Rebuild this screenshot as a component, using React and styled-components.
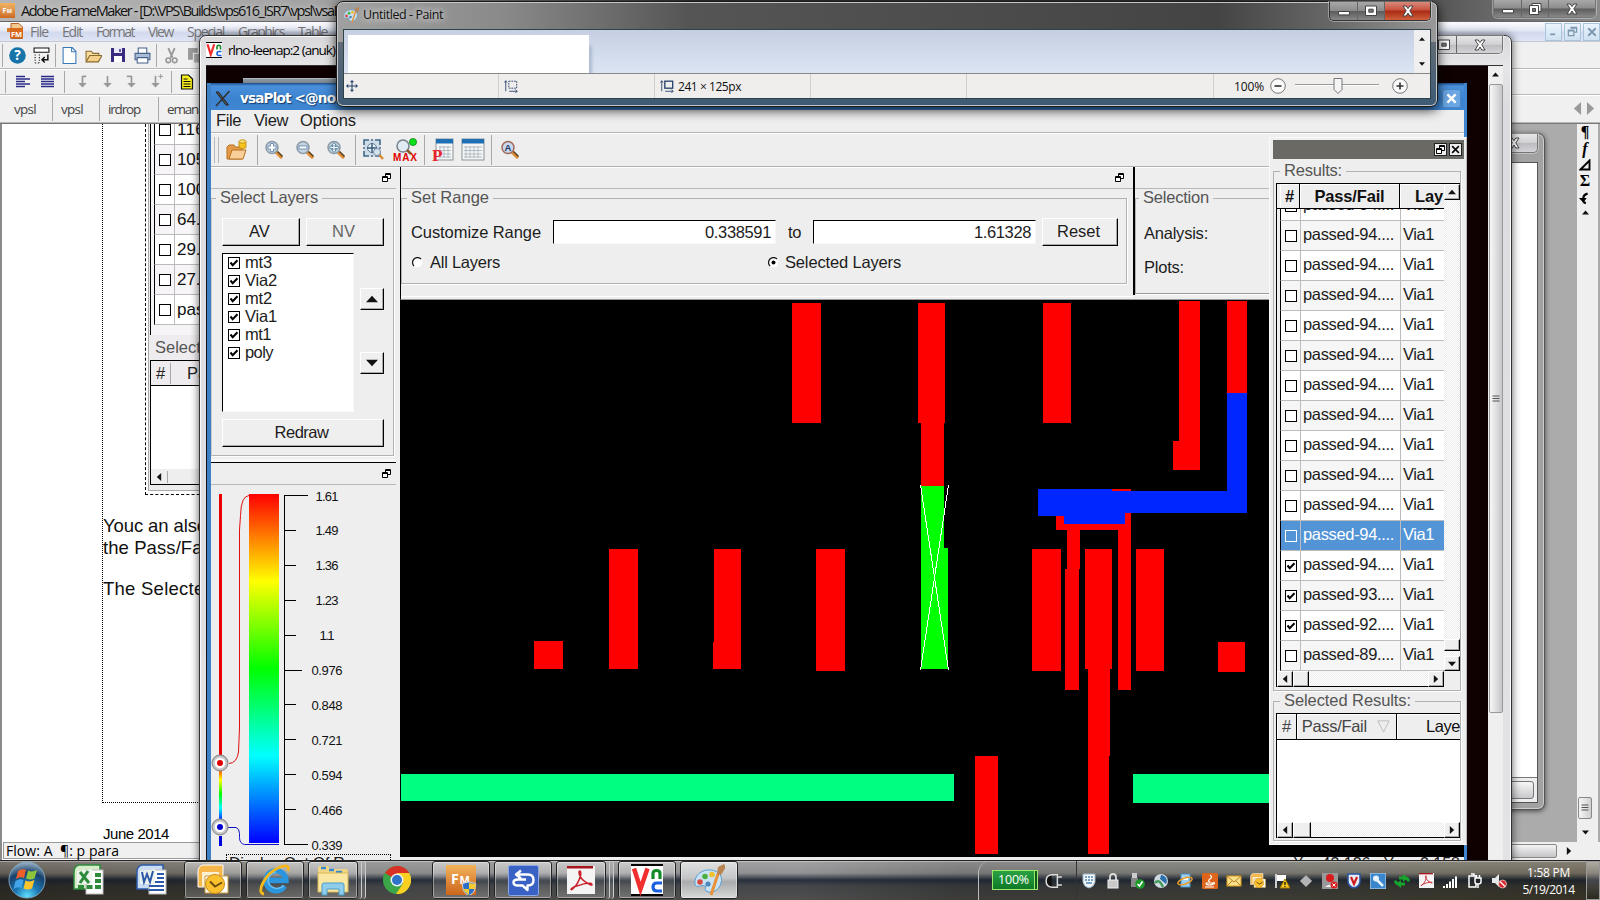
import React, { useLayoutEffect, useRef } from "react";
import styled, { createGlobalStyle, css } from "styled-components";

const helv = '"Liberation Sans", Arial, sans-serif';
const segoe = '"Open Sans", "Noto Sans", sans-serif';

const Global = createGlobalStyle`
  * { box-sizing: border-box; }
  html, body { margin: 0; padding: 0; }
  body { width: 1600px; height: 900px; overflow: hidden; font-family: ${helv}; }
  svg { display: block; flex: none; }
`;

const FitSpan = styled.span`
  display: inline-block;
  white-space: pre;
  flex: none;
`;

/* Tracks its text so that it fills a given width. */
function Fit({ w, children }) {
  const ref = useRef(null);
  useLayoutEffect(() => {
    const el = ref.current;
    el.style.letterSpacing = "0px";
    const natural = el.getBoundingClientRect().width;
    el.style.letterSpacing = (w - natural) / el.textContent.length + "px";
  }, [w, children]);
  return <FitSpan ref={ref}>{children}</FitSpan>;
}

const Desktop = styled.div`
  position: relative;
  width: 1600px;
  height: 900px;
  overflow: hidden;
  background: #ababab;
`;

/* ---------- FrameMaker ---------- */
const Frame = styled.section`
  position: absolute;
  inset: 0 0 40px 0;
  display: flex;
  flex-direction: column;
  background: #f0f0f0;
  font-family: ${segoe};
`;
const FrameTitle = styled.header`
  height: 22px;
  flex: none;
  display: flex;
  align-items: flex-start;
  justify-content: space-between;
  padding-right: 4px;
  background: linear-gradient(90deg, #b5b5b5 0, #a2a2a2 320px, #333 700px, #333 1200px, #5a5a5a 1450px, #8a8a8a 1600px);
  border-bottom: 1px solid #666;
`;
const TitleText = styled.div`
  display: flex;
  align-items: center;
  gap: 6px;
  height: 21px;
  font-size: 14.5px;
  color: #111;
  text-shadow: 0 0 6px #ddd;
`;
const MenuRow = styled.nav`
  height: 20px;
  flex: none;
  display: flex;
  align-items: center;
  background: linear-gradient(#fbfcff, #e4e8f5 45%, #d3daee 55%, #dfe4f6);
  font-size: 14px;
  color: #777;
  padding-left: 7px;
  border-bottom: 1px solid #c8c8d0;
`;
const MenuItem = styled.span`
  width: ${(p) => p.$w}px;
  flex: none;
`;
const Bar = styled.div`
  height: ${(p) => p.$h}px;
  flex: none;
  display: flex;
  align-items: center;
  border-bottom: 1px solid #b9b9b9;
  box-shadow: 0 1px #fff;
  padding-left: ${(p) => p.$pl || 0}px;
`;
const Sep = styled.i`
  width: 1px;
  align-self: stretch;
  margin: 2px ${(p) => p.$r ?? 6}px 1px ${(p) => p.$l ?? 6}px;
  background: #a8a8a8;
  flex: none;
`;
const Cell = styled.span`
  width: ${(p) => p.$w}px;
  flex: none;
  display: flex;
  justify-content: center;
`;
const DocTab = styled.span`
  width: ${(p) => p.$w}px;
  height: 24px;
  flex: none;
  display: flex;
  align-items: center;
  padding-left: ${(p) => p.$pl || 8}px;
  font-size: 13.5px;
  color: #444;
  border-right: 1px solid #aaa;
`;
const Spacer = styled.div`
  flex: 1;
`;
const MdiButton = styled.span`
  width: 17px;
  height: 18px;
  margin-left: 2px;
  display: grid;
  place-items: center;
  border: 1px solid #a9c3da;
  background: linear-gradient(#e9f3fc, #cfe2f2);
`;
const Workspace = styled.div`
  flex: 1;
  min-height: 0;
  display: flex;
  border-top: 1px solid #777;
  background: #ababab;
`;
const DocPane = styled.div`
  width: 210px;
  display: flex;
  flex-direction: column;
  border-left: 2px solid #8b8b8b;
  background: #fff;
`;
const Page = styled.div`
  margin-left: 100px;
  height: 679px;
  flex: none;
  padding-left: 42px;
  border-left: 1px dotted #000;
  border-bottom: 1px dotted #000;
  overflow: hidden;
`;
const Figure = styled.div`
  height: 371px;
  display: flex;
  flex-direction: column;
  border-left: 1px dashed #000;
  border-bottom: 1px dashed #000;
  padding: 0 0 3px 2px;
  font-family: ${helv};
`;
const FigPanel = styled.div`
  flex: 1;
  display: flex;
  flex-direction: column;
  background: #eeecee;
  border-left: 1px solid #aaa;
  border-bottom: 1px solid #aaa;
  padding-left: 1px;
`;
const FigTable = styled.div`
  height: 211px;
  flex: none;
  overflow: hidden;
  border-left: 1px solid #000;
  padding-left: 3px;
  background: #f6f4f6;
`;
const FigRow = styled.div`
  height: 30px;
  display: flex;
  align-items: center;
  border-left: 1px solid #000;
  border-bottom: 1px solid #bbb;
  background: ${(p) => (p.$alt ? "#f7f5f7" : "#fff")};
  font-size: 17px;
  color: #111;
  &:first-child { margin-top: -9px; }
`;
const FigCheck = styled.span`
  width: 20px;
  height: 100%;
  display: grid;
  place-items: center;
  border-right: 1px solid #bbb;
  margin-right: 2px;
  flex: none;
`;
const FigLegend = styled.div`
  height: 25px;
  flex: none;
  display: flex;
  align-items: center;
  padding-left: 5px;
  font-size: 16.5px;
  color: #555;
`;
const FigHead = styled.div`
  height: 26px;
  flex: none;
  display: flex;
  align-items: center;
  border: 1px solid #000;
  border-width: 1px 0 1px 1px;
  font-size: 16.5px;
  color: #222;
`;
const FigBody = styled.div`
  flex: 1;
  display: flex;
  flex-direction: column;
  justify-content: flex-end;
  border-left: 1px solid #000;
  border-bottom: 1px solid #000;
  background: #fff;
  margin-bottom: 5px;
`;
const FigScroll = styled.div`
  height: 15px;
  background: #eee;
  display: flex;
  align-items: center;
`;
const Para = styled.p`
  margin: ${(p) => p.$mt}px 0 0 -42px;
  height: 22px;
  font: 18.5px/22px ${helv};
  color: #111;
`;
const Footer = styled.div`
  font: 15px/18px ${helv};
  padding: 22px 0 0 101px;
  flex: none;
  height: 39px;
`;
const FlowBar = styled.div`
  height: 17px;
  flex: none;
  display: flex;
  align-items: center;
  padding-left: 2px;
  margin-left: 1px;
  font-size: 14px;
  line-height: 15px;
  background: #f0f0f0;
  border: 1px solid #999;
`;
const SymbolStrip = styled.div`
  width: 23px;
  margin-left: auto;
  display: flex;
  flex-direction: column;
  align-items: center;
  background: #efefef;
  border-right: 2px solid #aaa;
  padding-right: 5px;
  color: #000;
`;
const Symbol = styled.span`
  height: ${(p) => p.$h || 16.4}px;
  flex: none;
  display: grid;
  place-items: center;
  font: bold 16px/16px "Liberation Serif", serif;
  font-style: ${(p) => (p.$italic ? "italic" : "normal")};
`;
const ScrollThumb = styled.span`
  width: 14px;
  height: 22px;
  margin-top: 577px;
  flex: none;
  display: grid;
  place-items: center;
  border: 1px solid #888;
  border-radius: 2px;
  background: linear-gradient(90deg, #f5f5f5, #cfcfcf);
`;
const BottomScroll = styled.div`
  position: absolute;
  right: 0;
  bottom: 0;
  width: 90px;
  height: 18px;
  display: flex;
  align-items: center;
  background: #efefef;
  gap: 8px;
`;
const HThumb = styled.span`
  width: 47px;
  height: 14px;
  border: 1px solid #888;
  border-radius: 2px;
  background: linear-gradient(#f5f5f5, #c4c4c8);
`;
const BackWindow = styled.div`
  position: absolute;
  left: 1400px;
  top: 133px;
  width: 145px;
  height: 677px;
  border: 1px solid #555;
  border-radius: 7px;
  background: #a2a2a2;
  box-shadow: 0 1px 5px rgba(0, 0, 0, 0.6), inset 0 0 0 1px #ccc;
  padding: 0 6px 6px;
  display: flex;
  flex-direction: column;
`;
const BackTitle = styled.div`
  height: 28px;
  display: flex;
  justify-content: flex-end;
`;
const BackBody = styled.div`
  flex: 1;
  display: flex;
  flex-direction: column;
  justify-content: flex-end;
  border: 1px solid #555;
  background: #fff;
`;
const BackFoot = styled.div`
  height: 25px;
  padding: 3px;
  border-top: 1px solid #777;
  background: #eee;
`;
const BackThumb = styled.div`
  height: 18px;
  border: 1px solid #777;
  border-radius: 3px;
  background: linear-gradient(#f7f7f7, #c8c8cc);
`;

/* ---------- caption buttons ---------- */
const Caption = styled.div`
  display: flex;
  height: ${(p) => p.$h || 18}px;
  border: 1px solid ${(p) => (p.$dark ? "#333" : "#777")};
  border-top: 0;
  border-radius: 0 0 5px 5px;
  overflow: hidden;
  box-shadow: 0 0 0 1px rgba(255, 255, 255, 0.35);
`;
const CapBtn = styled.span`
  width: ${(p) => p.$w}px;
  display: grid;
  place-items: center;
  border-right: 1px solid #666;
  background: ${(p) =>
    p.$red
      ? "linear-gradient(#d98a7c, #c8503c 45%, #a82a14 50%, #d0603c)"
      : p.$light
      ? "linear-gradient(#e6e6e8, #d0d0d4 50%, #bcbcc0 52%, #d4d4d8)"
      : "linear-gradient(#a8a8a8, #8c8c8c 48%, #5c5c5c 52%, #888)"};
  &:last-child { border-right: 0; }
`;
const CapIcon = ({ kind, size = 12 }) => (
  <svg width={size + 2} height={size} viewBox="0 0 14 12" fill="none" stroke="#444" strokeLinejoin="round">
    {kind === "min" && <rect x="1.5" y="6.5" width="11" height="3.4" fill="#fff" />}
    {kind === "max" && (
      <>
        <rect x="1.5" y="1" width="11" height="9.5" fill="#fff" />
        <rect x="4.8" y="4.2" width="4.4" height="3" fill="#777" />
      </>
    )}
    {kind === "restore" && (
      <>
        <rect x="4" y="0.5" width="9" height="8" fill="#fff" />
        <rect x="1.5" y="2.5" width="9" height="9" fill="#fff" />
        <rect x="4.5" y="5.5" width="3" height="3" fill="#777" />
      </>
    )}
    {kind === "x" && (
      <path d="M2 1h3.2L7 3.6 8.800 1H12L8.800 5.800 12 11H8.800L7 8 5.200 11H2l3.200-5.200z" fill="#fff" />
    )}
  </svg>
);

/* ---------- VNC window ---------- */
const Vnc = styled.section`
  position: absolute;
  left: 199px;
  top: 35px;
  width: 1313px;
  height: 840px;
  border: 1px solid #333;
  border-radius: 7px 7px 0 0;
  padding: 0 8px 0 6px;
  background: linear-gradient(#d8d8da, #e6e6e8 30px, #dcdce0 70px, #e3e3e6);
  box-shadow: 0 0 9px rgba(0, 0, 0, 0.65), inset 0 0 0 1px #fafafa;
`;
const VncTitle = styled.header`
  height: 29px;
  display: flex;
  align-items: flex-start;
  justify-content: space-between;
  font: 13.5px ${segoe};
  color: #000;
`;
const VncName = styled.div`
  display: flex;
  align-items: center;
  gap: 6px;
  height: 27px;
`;
const VncClient = styled.div`
  display: flex;
  height: 810px;
  border-top: 1px solid #333;
  border-left: 1px solid #111;
  background: #0f0002;
`;
const RemoteDesk = styled.div`
  flex: 1;
  padding-top: 12px;
`;
const RemoteBack = styled.div`
  margin-left: 36px;
  width: 700px;
  height: 8px;
  background: linear-gradient(#8f9aa4, #66717c);
  border-top: 1px solid #b0b8c0;
`;
const VScroll = styled.div`
  width: 15px;
  display: flex;
  flex-direction: column;
  align-items: center;
  background: #efefef;
  padding-top: 5px;
`;
const VThumb = styled.div`
  width: 14px;
  height: 629px;
  margin-top: 6px;
  border: 1px solid #999;
  border-radius: 2px;
  background: linear-gradient(90deg, #f7f7f7, #e2e2e4 45%, #c6c6ca);
  display: grid;
  place-items: center;
`;

/* ---------- vsaPlot ---------- */
const Vsa = styled.section`
  position: absolute;
  left: 207px;
  top: 83px;
  width: 1260px;
  height: 778px;
  display: flex;
  flex-direction: column;
  border-left: 4px solid #3f7fc4;
  border-right: 3px solid #3f86d0;
  background: #eee;
  color: #1c1c1c;
  font-size: 16.5px;
`;
const VsaTitle = styled.header`
  height: 27px;
  flex: none;
  display: flex;
  align-items: center;
  justify-content: space-between;
  padding: 3px 3px 0 3px;
  background: linear-gradient(#1c4d88, #4a90dc 3px, #3b82cf 60%, #3f86d2);
  color: #fff;
  font: bold 13.5px "DejaVu Sans", sans-serif;
  text-shadow: 1px 1px 1px #123a6b;
`;
const VsaName = styled.span`
  display: flex;
  align-items: center;
  gap: 9px;
`;
const VsaClose = styled.span`
  width: 19px;
  height: 19px;
  display: grid;
  place-items: center;
  border-radius: 3px;
  background: #6aa6e4;
  box-shadow: inset 0 0 0 1px #4a86c4;
`;
const VsaMenu = styled.nav`
  height: 23px;
  flex: none;
  display: flex;
  align-items: center;
  padding: 0 0 1px 5px;
  border-bottom: 1px solid #b4b4b4;
`;
const VsaTools = styled.div`
  height: 34px;
  flex: none;
  display: flex;
  align-items: center;
  border-bottom: 1px solid #b0b0b0;
  box-shadow: 0 1px #fff, inset 0 1px #fff;
  padding-left: 3px;
`;
const Handle = styled.i`
  width: 5px;
  height: 26px;
  border: 1px solid #b8b8b8;
  border-width: 0 1px;
`;
const Main = styled.div`
  flex: 1;
  min-height: 0;
  display: flex;
`;
const Side = styled.aside`
  width: 189px;
  flex: none;
  display: flex;
  flex-direction: column;
  padding-right: 4px;
  overflow: hidden;
`;
const DockHead = styled.div`
  height: ${(p) => p.$h || 22}px;
  flex: none;
  display: flex;
  align-items: center;
  justify-content: flex-end;
  padding-right: ${(p) => p.$pr ?? 5}px;
  padding-bottom: 1px;
  border-bottom: 1px solid #b8b8b8;
  border-top: ${(p) => (p.$line ? "1px solid #000" : "0")};
`;
const SideGap = styled.div`
  height: 6px;
  flex: none;
  border-bottom: 3px solid #f8f8f8;
`;
const Group = styled.fieldset`
  margin: 0;
  min-width: 0;
  flex: none;
  border: 1px solid #b2b2b2;
  box-shadow: 1px 1px #fff;
  padding: 0;
  legend {
    padding: 0 4px;
    margin-left: ${(p) => p.$ml ?? 6}px;
    height: 18px;
    line-height: 17px;
    font-size: 16.5px;
    color: #555;
  }
`;
const LayersGroup = styled(Group)`
  height: 267px;
  border-left-color: #ccc;
  width: 183px;
`;
const LayersBody = styled.div`
  padding: 11px 8px 0 10px;
  display: grid;
  grid-template-columns: 78px 78px;
  column-gap: 6px;
  row-gap: 7px;
`;
const Button = styled.button`
  height: 28px;
  width: ${(p) => (p.$w ? p.$w + "px" : "100%")};
  padding: 0 3px 2px 0;
  font: 16.5px ${helv};
  color: ${(p) => (p.$dim ? "#666" : "#1c1c1c")};
  background: #efefef;
  border: 1px solid;
  border-color: #fff #000 #000 #fff;
  box-shadow: inset -1px -1px #a8a8a8;
  border-radius: 0;
  flex: none;
  ${(p) => p.$wide && css`grid-column: 1 / 3;`}
`;
const ListRow = styled.div`
  grid-column: 1 / 3;
  display: flex;
  justify-content: space-between;
`;
const LayerList = styled.ul`
  margin: 0;
  padding: 0 0 0 5px;
  width: 132px;
  height: 159px;
  list-style: none;
  background: #fff;
  border: 1px solid #000;
  border-right-color: #f8f8f8;
  border-bottom-color: #f8f8f8;
  li {
    height: 18px;
    display: flex;
    align-items: center;
    gap: 5px;
    font-size: 16.5px;
  }
  li > span { margin-top: -2px; }
`;
const Arrows = styled.div`
  display: flex;
  flex-direction: column;
  gap: 42px;
  padding-top: 35px;
`;
const SmallBtn = styled.span`
  width: ${(p) => p.$w || 16}px;
  height: ${(p) => p.$h || 16}px;
  display: grid;
  place-items: center;
  background: #efefef;
  border: 1px solid;
  border-color: #fff #000 #000 #fff;
  box-shadow: inset -1px -1px #aaa;
  flex: none;
`;
const ScaleBox = styled.div`
  height: 369px;
  flex: none;
`;
const RangeNote = styled.div`
  margin-left: 15px;
  width: 165px;
  height: 20px;
  flex: none;
  border: 1px dotted #000;
  font-size: 16px;
  line-height: 18px;
  padding-left: 2px;
`;
const Center = styled.div`
  flex: 1;
  min-width: 0;
  display: flex;
  flex-direction: column;
`;
const TopDocks = styled.div`
  height: 133px;
  flex: none;
  display: flex;
  border-left: 1px solid #000;
  border-bottom: 1px solid #999;
`;
const RangeDock = styled.div`
  width: 732px;
  flex: none;
  height: 130px;
  border-bottom: 1px solid #fff;
`;
const RangeGroup = styled(Group)`
  width: 726px;
  height: 95px;
`;
const RangeLine = styled.div`
  display: flex;
  align-items: center;
  padding: ${(p) => p.$pt}px 0 0 9px;
`;
const NumInput = styled.div`
  width: 223px;
  height: 24px;
  display: flex;
  justify-content: flex-end;
  align-items: center;
  padding-right: 4px;
  background: #fff;
  border: 1px solid #000;
  border-right-color: #f8f8f8;
  border-bottom-color: #f8f8f8;
`;
const Gap = styled.i`
  width: ${(p) => p.$w}px;
  flex: none;
`;
const SelectionDock = styled.div`
  flex: 1;
  height: 128px;
  border-left: 2px solid #000;
`;
const SelectionGroup = styled(Group)`
  height: 105px;
  border-bottom-color: #999;
`;
const SelRow = styled.div`
  height: 34px;
  padding-left: 8px;
  &:first-of-type { margin-top: 17px; }
`;
const StatusLine = styled.div`
  height: 3px;
  flex: none;
  overflow: hidden;
  background: #eee;
  font-size: 16px;
  line-height: 14px;
  text-align: right;
  white-space: pre;
  padding-right: 4px;
`;
const Checker = css`
  background: repeating-conic-gradient(#fff 0 25%, #ececec 0 50%) 0 0 / 2px 2px;
`;

/* ---------- results panel ---------- */
const Results = styled.section`
  position: absolute;
  left: 1269px;
  top: 137px;
  width: 198px;
  height: 708px;
  padding: 2px 5px 0 3px;
  background: #eee;
  border: 1px solid #fafafa;
  border-right-color: #bbb;
  color: #1c1c1c;
`;
const ResHead = styled.div`
  height: 19px;
  margin-right: -3px;
  display: flex;
  align-items: center;
  justify-content: flex-end;
  gap: 2px;
  padding-right: 2px;
  background: #6b6964;
`;
const HeadBtn = styled.span`
  width: 13px;
  height: 13px;
  display: grid;
  place-items: center;
  background: #eee;
  border: 1px solid #222;
`;
const ResGroup = styled(Group)`
  margin-top: ${(p) => p.$mt}px;
  height: ${(p) => p.$h}px;
  padding: 0 1px 0 2px;
`;
const ResGrid = styled.div`
  margin-top: ${(p) => p.$mt || 3}px;
  width: 184px;
  display: grid;
  grid-template-columns: 1fr 16px;
  border-top: 1px solid #000;
  border-left: 1px solid #000;
  overflow: hidden;
`;
const HeadRow = styled.div`
  height: 25px;
  display: flex;
  font-weight: ${(p) => (p.$bold ? "bold" : "normal")};
  font-size: 16.5px;
  border-bottom: 1px solid #000;
  padding-left: ${(p) => p.$pl || 0}px;
  overflow: hidden;
`;
const WideHead = styled.div`
  grid-column: 1 / 3;
  height: 26px;
  display: flex;
  font-size: 16.5px;
  border-bottom: 1px solid #000;
`;
const HeadCell = styled.span`
  width: ${(p) => p.$w}px;
  flex: none;
  display: flex;
  align-items: center;
  justify-content: ${(p) => p.$j || "center"};
  border-right: 1px solid #000;
  box-shadow: inset 1px 1px #fff;
  color: ${(p) => (p.$dim ? "#444" : "#111")};
  &:last-child { border-right: 0; }
`;
const Rows = styled.div`
  height: 462px;
  display: flex;
  flex-direction: column;
  justify-content: flex-end;
  overflow: hidden;
  padding-left: 3px;
`;
const Row = styled.div`
  height: 30px;
  flex: none;
  display: flex;
  border-left: 1px solid #000;
  border-bottom: 1px solid #bcbcbc;
  color: ${(p) => (p.$on ? "#fff" : "#1c1c1c")};
  background: ${(p) => (p.$on ? "#5294d6" : p.$alt ? "#f6f6f6" : "#fff")};
  font-size: 16.5px;
`;
const RowCell = styled.span`
  width: ${(p) => p.$w}px;
  flex: none;
  display: flex;
  align-items: center;
  padding-left: ${(p) => p.$pl}px;
  padding-bottom: ${(p) => p.$pb ?? 0}px;
  border-right: 1px solid #bcbcbc;
  &:last-child { border-right: 0; }
`;
const ScrollCol = styled.div`
  ${Checker}
  display: flex;
  flex-direction: column;
`;
const TinyGap = styled.div`
  height: 5px;
`;
const ScrollRow = styled.div`
  ${Checker}
  grid-column: ${(p) => p.$span || "1"};
  height: 16px;
  display: flex;
  border-bottom: 1px solid #000;
`;
const EmptyBody = styled.div`
  grid-column: 1 / 3;
  height: 82px;
  background: #fff;
`;

/* ---------- Paint ---------- */
const Paint = styled.section`
  position: absolute;
  left: 336px;
  top: 1px;
  width: 1102px;
  height: 106px;
  display: flex;
  flex-direction: column;
  padding: 0 6px 7px 6px;
  border: 1px solid #1a1a1a;
  border-radius: 7px;
  background: linear-gradient(90deg, #a0a0a0, #8a8a8a 15%, #555 32%, #444 80%, #666 90%, #999) top / 100% 40px no-repeat,
    linear-gradient(#777, #3d5a75);
  box-shadow: 0 3px 12px rgba(0, 0, 0, 0.8), inset 0 0 0 1px #c4c8cc;
  font-family: ${segoe};
`;
const PaintTitle = styled.header`
  height: 27px;
  flex: none;
  display: flex;
  justify-content: space-between;
  align-items: flex-start;
`;
const PaintName = styled.div`
  height: 25px;
  display: flex;
  align-items: center;
  gap: 4px;
  font-size: 12.5px;
  color: #111;
  text-shadow: 0 0 6px #ddd, 0 0 8px #ddd;
`;
const PaintClient = styled.div`
  flex: 1;
  display: flex;
  flex-direction: column;
  border: 1px solid #2d4348;
  background: #f0eded;
`;
const PaintArea = styled.div`
  height: 44px;
  display: flex;
  padding: 5px 0 0 4px;
  background: linear-gradient(#c6cfe2, #dce5f3);
  border-bottom: 1px solid #888;
`;
const Sheet = styled.div`
  width: 241px;
  background: #fff;
  box-shadow: 5px 9px 3px -2px #aebbd2;
  clip-path: inset(0 -10px 0 0);
`;
const PaintScroll = styled.div`
  width: 16px;
  margin: -5px 0 0 auto;
  display: flex;
  flex-direction: column;
  align-items: center;
  justify-content: space-between;
  padding: 6px 0 6px;
  background: #efefef;
`;
const PaintStatus = styled.div`
  flex: 1;
  display: flex;
  align-items: center;
  font-size: 12px;
  color: #111;
`;
const StatusCell = styled.div`
  width: ${(p) => p.$w}px;
  height: 24px;
  flex: none;
  display: flex;
  align-items: center;
  gap: 4px;
  padding-left: ${(p) => p.$pl ?? 5}px;
  border-right: 1px solid #d0cfcf;
`;

/* ---------- taskbar ---------- */
const Taskbar = styled.footer`
  position: absolute;
  left: 0;
  right: 0;
  bottom: 0;
  height: 40px;
  display: flex;
  align-items: stretch;
  border-top: 1px solid #222;
  background: linear-gradient(rgba(255, 255, 255, 0.32), rgba(255, 255, 255, 0.2) 12px, rgba(14, 24, 40, 0.75) 19px, rgba(20, 24, 28, 0.5) 25px, rgba(30, 30, 22, 0.45)),
    linear-gradient(90deg, #3b352b 0, #4a463c 200px, #6c6c6c 330px, #77777a 800px, #555 960px, #55544a 1300px, #4a4230 1600px);
  box-shadow: inset 0 1px rgba(255, 255, 255, 0.35);
  color: #fff;
  font-family: ${segoe};
`;
const TaskItem = styled.div`
  width: ${(p) => p.$w}px;
  margin: 0 ${(p) => p.$mr ?? 4}px 0 0;
  height: 38px;
  flex: none;
  display: grid;
  place-items: center;
  border-radius: 3px;
  ${(p) =>
    p.$open &&
    css`
      border: 1px solid #c8c8c8;
      outline: 1px solid #222;
      outline-offset: -1px;
      box-shadow: inset 0 0 0 1px rgba(255, 255, 255, 0.4);
      background: ${p.$active
        ? "linear-gradient(#e0e0e0, #c4c6c8 45%, #a9abad 55%, #d8d8d8)"
        : "linear-gradient(rgba(255,255,255,.45), rgba(255,255,255,.25) 40%, rgba(120,120,120,.3) 55%, rgba(200,200,200,.3))"};
    `}
`;
const StackEdge = styled.i`
  width: 4px;
  height: 38px;
  flex: none;
  margin-right: 0;
  border-right: 1px solid #ccc;
  border-radius: 0 3px 3px 0;
  background: rgba(255, 255, 255, 0.15);
`;
const PowerBox = styled.div`
  width: 99px;
  margin-left: auto;
  display: flex;
  align-items: center;
  gap: 10px;
  padding-left: 13px;
  border-left: 1px solid #bbb;
  border-right: 1px solid #333;
  border-radius: 12px 0 0 0;
`;
const Battery = styled.div`
  width: 43px;
  height: 20px;
  display: grid;
  place-items: center;
  margin-top: -2px;
  font-size: 12.5px;
  background: linear-gradient(#2aa142, #0f7a28);
  border: 1px solid #9ee86a;
  box-shadow: 3px 0 0 -1px #0c5a1c, 3px 0 0 0 #9ee86a;
`;
const Tray = styled.div`
  width: 434px;
  display: flex;
  align-items: center;
`;
const Clock = styled.div`
  width: 75px;
  display: flex;
  flex-direction: column;
  align-items: center;
  font-size: 12px;
  line-height: 17px;
  padding-top: 3px;
`;
const ShowDesk = styled.div`
  width: 14px;
  border: 1px solid #999;
  background: linear-gradient(rgba(255, 255, 255, 0.35), rgba(0, 0, 0, 0.2));
`;

/* ---------- icons ---------- */
const Check = ({ on, light, size = 12 }) => (
  <svg width={size} height={size} viewBox="0 0 12 12">
    <rect x="0.5" y="0.5" width="11" height="11" fill={light ? "none" : "#fff"} stroke={light ? "#fff" : "#000"} />
    {on && <path d="M2.500 5.500l2.200 2.700L9.500 3.300" fill="none" stroke="#000" strokeWidth="2" />}
  </svg>
);
const Tri = ({ d = "up", w = 8, c = "#111" }) => {
  const rot = { up: 0, right: 90, down: 180, left: 270 }[d];
  return (
    <svg width={w} height={w} viewBox="0 0 8 8">
      <path d="M0 6.200L4 1.800 8 6.200z" fill={c} transform={`rotate(${rot} 4 4)`} />
    </svg>
  );
};
const Float = () => (
  <svg width="9" height="9" viewBox="0 0 9 9" fill="#fff" stroke="#000">
    <path d="M3.500 .5h5v5h-5zM3.500 1.500h5" />
    <path d="M.5 3.500h5v5h-5zM.5 4.500h5" />
  </svg>
);
const Radio = ({ on }) => (
  <svg width="11" height="11" viewBox="0 0 11 11">
    <circle cx="5.500" cy="5.500" r="5" fill="#fff" />
    <path d="M2 9A4.700 4.700 0 0 1 9 2" fill="none" stroke="#111" strokeWidth="1.200" />
    {on && <circle cx="5.500" cy="5.500" r="2" fill="#000" />}
  </svg>
);
const FmLogo = ({ size = 15, shield }) => (
  <svg width={size} height={size} viewBox="0 0 30 30">
    <defs>
      <linearGradient id="fm" x1="0" y1="0" x2="0" y2="1">
        <stop offset="0" stopColor="#f2b25a" />
        <stop offset="1" stopColor="#cc661c" />
      </linearGradient>
    </defs>
    <rect width="30" height="30" fill="url(#fm)" />
    <text x="5" y="19" fontFamily="Open Sans" fontWeight="bold" fontSize="14" fill="#fff">F</text>
    <text x="13.500" y="19" fontFamily="Open Sans" fontWeight="bold" fontSize="11" fill="#fff">M</text>
    {shield && (
      <g>
        <path d="M23 17c3 0 4 1 6.500 1.500 0 6-1.500 10-6.500 12-5-2-6.500-6-6.500-12C19 18 20 17 23 17z" fill="#2d6fc8" stroke="#ddd" />
        <path d="M23 18v6h6c.4-2 .4-3.500.4-5zM23 24v5.500c-3-1.500-4.500-3-5.300-5.500z" fill="#f6cd30" />
      </g>
    )}
  </svg>
);
const FmMenuLogo = () => (
  <svg width="17" height="17" viewBox="0 0 17 17">
    <path d="M4 .5h8l3.500 3.500v11.500H4z" fill="#f3c890" stroke="#b5632a" />
    <rect x="0" y="5" width="5" height="4" fill="#d9792c" />
    <rect x="3" y="5" width="13" height="10" fill="#d9691c" />
    <text x="4" y="13.500" textLength="11" fontFamily="Open Sans" fontWeight="bold" fontSize="7.500" fill="#fff">FM</text>
  </svg>
);
const VncLogo = ({ size = 16 }) => (
  <svg width={size} height={size} viewBox="0 0 32 32">
    <rect width="32" height="32" fill="#000" />
    <rect y="2" width="32" height="28" fill="#fff" />
    <path d="M3 4.500L9.500 25 16.500 4.500" fill="none" stroke="#f22f2f" strokeWidth="4.500" />
    <path d="M22 15V9.500q0-3 3.500-3t3.500 3V15" fill="none" stroke="#128a28" strokeWidth="3.200" />
    <path d="M31 19h-5q-4 0-4 4t4 4h5" fill="none" stroke="#1c5fe0" strokeWidth="3.200" />
  </svg>
);
const PaintLogo = ({ size = 16 }) => (
  <svg width={size} height={size} viewBox="0 0 32 32">
    <path d="M2 20C1 11 9 5 18 6c8 1 12 6 10 13-2 8-10 11-15 8-2-2 1-4-1-5-3-2-9 3-10-2z" fill="#c9e3f5" stroke="#5aa0d0" />
    <circle cx="7" cy="18" r="2.800" fill="#d8483c" />
    <circle cx="12" cy="12.500" r="2.800" fill="#4caf3f" />
    <circle cx="19" cy="10.500" r="2.800" fill="#f0c030" />
    <circle cx="15" cy="20" r="2.600" fill="#4b87b8" />
    <path d="M18 31l7-21" stroke="#e8913a" strokeWidth="3" />
    <path d="M24 10l1-7 6-3 2 3-5 8z" fill="#b98552" />
  </svg>
);
const Mag = ({ kind }) => (
  <svg width="20" height="20" viewBox="0 0 20 20">
    <path d="M12 12l5 5" stroke="#e0913a" strokeWidth="3.200" strokeLinecap="round" />
    <path d="M13.500 11.500l5 5" stroke="#5b4020" strokeWidth="1.600" />
    <circle cx="8" cy="7.500" r="6" fill={kind === "A" ? "#c9d8ee" : "#c3d3df"} stroke={kind === "A" ? "#a06a5a" : "#8b9aa6"} strokeWidth="1.500" />
    {kind === "in" && <path d="M6.500 3.500h3v2.600h2.500v3H9.500v2.500h-3V9.100H4v-3h2.500z" fill="#fff" stroke="#5b7fa8" strokeWidth=".8" />}
    {kind === "out" && <rect x="4" y="6" width="8" height="3" fill="#fff" stroke="#5b7fa8" strokeWidth=".8" />}
    {kind === "fit" && <path d="M8 2.500l2 2.500H9v1.500h1.500v-1L13 7.500l-2.500 2v-1H9V10h1l-2 2.500L6 10h1V8.500H5.500v1L3 7.500l2.500-2v1H7V5H6z" fill="#e9f2f8" stroke="#4d7898" strokeWidth=".8" />}
    {kind === "A" && (
      <text x="8" y="11" fontSize="9.500" fontWeight="bold" fontFamily="Liberation Sans" textAnchor="middle" fill="#223a66">A</text>
    )}
  </svg>
);
const OpenDb = () => (
  <svg width="22" height="22" viewBox="0 0 22 22">
    <path d="M1 8l2-2h5l1 2h7v12H1z" fill="#e59a4a" stroke="#b8701f" />
    <path d="M3 20l3-9h14l-3 9z" fill="#f8cf98" stroke="#b8701f" />
    <path d="M13 2.500v6q3.500 2.500 7 0v-6z" fill="#f6c51d" stroke="#b8860b" strokeWidth=".8" />
    <ellipse cx="16.500" cy="2.500" rx="3.500" ry="1.700" fill="#fbe070" stroke="#b8860b" strokeWidth=".8" />
  </svg>
);
const ZoomArea = () => (
  <svg width="21" height="21" viewBox="0 0 21 21" fill="none">
    <rect x="0.500" y="0.500" width="17" height="17" fill="#cfdce6" />
    <path d="M1 6V1h5M12 1h5v5M17 12v5h-5M6 17H1v-5" stroke="#47698a" strokeWidth="1.600" />
    <path d="M8 1h2M8 17h2M1 8v2M17 8v2" stroke="#47698a" strokeWidth="1.400" />
    <circle cx="9" cy="9" r="4.500" fill="#e8f0f6" stroke="#5d7f9d" />
    <path d="M9 4v10M4 9h10" stroke="#35597c" strokeWidth="1.400" />
    <circle cx="14" cy="13" r="3.500" fill="#d5e3ee" stroke="#7c93a5" />
    <path d="M16.500 16l3.500 4" stroke="#d88a30" strokeWidth="2.400" />
  </svg>
);
const ZoomMax = () => (
  <svg width="25" height="24" viewBox="0 0 25 24">
    <circle cx="10" cy="8" r="6" fill="#dfeaf2" stroke="#75838f" strokeWidth="1.500" />
    <path d="M14 12l4 4" stroke="#8a5a28" strokeWidth="2.500" />
    <circle cx="20" cy="4" r="3.600" fill="#0be01a" stroke="#087a10" strokeWidth=".7" />
    <text x="0" y="23" textLength="24" fontFamily="Liberation Sans" fontWeight="bold" fontSize="10" fill="#e00000">MAX</text>
  </svg>
);
const TableIcon = ({ p }) => (
  <svg width="24" height="24" viewBox="0 0 24 24">
    <rect x={p ? 5 : 1} y="1" width={p ? 17 : 22} height="21" fill="#f4f6f6" stroke="#8b9499" />
    <rect x={p ? 5 : 1} y="1" width={p ? 17 : 22} height="4.500" fill="#1f6fb5" />
    <path d={p ? "M8 9h12M8 12.500h12M8 16h12M8 19h12M9 8v12M13 8v12M17 8v12" : "M3 9h18M3 12.500h18M3 16h18M3 19h18M5 8v12M9 8v12M13 8v12M17 8v12"} stroke="#aab5bc" strokeWidth=".9" />
    {p && <text x="1" y="23" fontFamily="Liberation Serif" fontWeight="bold" fontSize="17" fill="#e8202a">P</text>}
  </svg>
);
const XLogo = () => (
  <svg width="17" height="17" viewBox="0 0 17 17">
    <path d="M2 2h2.500l10 13H12z" fill="#555" stroke="#222" />
    <path d="M15.500 1L2 16" stroke="#333" strokeWidth="1.600" />
  </svg>
);
const S = ({ w = 16, h, vb, children }) => (
  <svg width={w} height={h || w} viewBox={vb || "0 0 16 16"} fill="none">{children}</svg>
);
const DownArrow = ({ lead, plus }) => (
  <S w={15}>
    <path d={`M8 2v8${lead === "l" ? "M8 2.500h4" : lead === "r" ? "M8 2.500H3" : ""}`} stroke="#999" strokeWidth="1.800" />
    <path d="M3.500 9.500h9L8 14.500z" fill="#999" />
    {plus && <path d="M13.500 0v5M11 2.500h5" stroke="#999" />}
  </S>
);
const Lines = ({ full }) => (
  <S w={16}>
    {[2.5, 5, 7.5, 10, 12.5].map((y, i) => (
      <path key={y} d={`M1 ${y}h${full ? 13 : i % 2 ? 14 : 9}`} stroke="#2a2a8c" strokeWidth="1.500" />
    ))}
  </S>
);

/* ---------- layout plot ---------- */
const red = [
  [792, 303, 821, 423], [918, 303, 945, 423], [921, 423, 944, 486], [1043, 303, 1071, 423],
  [1179, 301, 1200, 470], [1173, 441, 1200, 470], [1227, 301, 1247, 393],
  [1112, 489, 1131, 530], [1056, 516, 1131, 530], [1118, 513, 1131, 690], [1067, 530, 1080, 569],
  [1065, 569, 1079, 690], [1032, 549, 1061, 671], [1085, 549, 1112, 669], [1136, 549, 1164, 671],
  [1088, 669, 1110, 756], [1088, 756, 1109, 854], [1218, 642, 1245, 672], [975, 756, 998, 854],
  [609, 549, 638, 669], [714, 549, 741, 669], [713, 642, 741, 669], [816, 549, 845, 671], [534, 641, 563, 669],
];
const blue = [[1227, 393, 1247, 513], [1112, 491, 1247, 513], [1038, 489, 1112, 516], [1064, 510, 1125, 524]];
const lime = [[921, 486, 944, 669], [921, 548, 948, 669]];
const mint = [[401, 774, 954, 801], [1133, 774, 1269, 803]];
const rects = (list, fill) =>
  list.map(([x, y, x2, y2]) => <rect key={`${x}-${y}-${y2}`} x={x} y={y} width={x2 - x} height={y2 - y} fill={fill} />);

const Plot = () => (
  <svg width="1064" height="557" viewBox="400 300 1064 557" shapeRendering="crispEdges">
    <rect x="400" y="300" width="1066" height="560" fill="#000" />
    {rects(red, "#f00")}
    {rects(blue, "#0026ff")}
    {rects(lime, "#0f0")}
    {rects(mint, "#00ff80")}
    <path d="M920.500 485L948.500 670M948.500 485L920.500 670" stroke="#fff" />
  </svg>
);

const labels = ["1.61", "1.49", "1.36", "1.23", "1.1", "0.976", "0.848", "0.721", "0.594", "0.466", "0.339"];
const Knob = ({ y, c }) => (
  <g>
    <circle cx="220" cy={y} r="8.500" fill="#8d8d8d" />
    <circle cx="220" cy={y} r="7.300" fill="#c8c8c8" />
    <circle cx="220" cy={y} r="5.300" fill="#fff" />
    <circle cx="220" cy={y} r="3" fill={c} />
  </g>
);
const ColorScale = () => (
  <svg width="185" height="369" viewBox="211 485 185 369">
    <defs>
      <linearGradient id="scale" x1="0" y1="0" x2="0" y2="1">
        <stop offset="0" stopColor="#f00" />
        <stop offset=".25" stopColor="#ff0" />
        <stop offset=".5" stopColor="#0f0" />
        <stop offset=".75" stopColor="#0ff" />
        <stop offset="1" stopColor="#00f" />
      </linearGradient>
    </defs>
    <rect x="219" y="494" width="3" height="262" fill="#e80000" />
    <rect x="219" y="766" width="3" height="56" fill="url(#scale)" />
    <rect x="219" y="836" width="3" height="10" fill="#00d" />
    <path d="M249 495.500q-8 .5-8.500 20L239.500 530V728l-1 24q-1.500 11-9.500 11.500" fill="none" stroke="#e01010" />
    <path d="M228 827.500h8q3.500 1 3.500 6v4q0 6 5 7H279" fill="none" stroke="#1010c8" />
    <rect x="249" y="494" width="30" height="349" fill="url(#scale)" />
    <path d="M284.500 495V845" stroke="#000" />
    {labels.map((t, i) => (
      <g key={t}>
        <path d={`M284 ${Math.round(495 + i * 34.9) + 0.5}h${i === 0 || i === 10 ? 24 : i === 5 ? 18 : 12}`} stroke="#000" />
        <text x="327" y={500.5 + i * 34.9} fontFamily="Liberation Sans" fontSize="13" textLength={t.length === 5 ? 31 : t.length === 4 ? 23 : 15} textAnchor="middle" fill="#111">{t}</text>
      </g>
    ))}
    <Knob y={763} c="#e00000" />
    <Knob y={827} c="#0000d0" />
  </svg>
);

/* ---------- taskbar drawings ---------- */
const Orb = () => (
  <svg width="38" height="38" viewBox="0 0 38 38">
    <defs>
      <radialGradient id="orb" cx=".5" cy=".95" r=".95">
        <stop offset="0" stopColor="#5fe0ff" />
        <stop offset=".35" stopColor="#1c78b4" />
        <stop offset=".7" stopColor="#17406b" />
        <stop offset="1" stopColor="#9fb6c8" />
      </radialGradient>
    </defs>
    <circle cx="19" cy="19" r="18" fill="url(#orb)" stroke="#7fa6c0" />
    <path d="M10 10q4-3 8-1l-2 8q-4-2-8 1z" fill="#f0602a" />
    <path d="M20 9.500q4 2 9-.5l-2.500 8.500q-4 2-8.500 0z" fill="#8cc43c" />
    <path d="M7.500 20q4-3 8-1l-2 8q-4-2-8 1z" fill="#42a4e8" />
    <path d="M17.500 19.500q4 2 9-.5L24 27.500q-4 2-8.500 0z" fill="#fcc52c" />
  </svg>
);
const Office = ({ c, bg, mark }) => (
  <svg width="32" height="32" viewBox="0 0 32 32">
    <path d="M7 1h21v24H2V8q0-6 5-7z" fill={bg} stroke={c} strokeWidth="1.500" />
    <rect x="14" y="6" width="17" height="24" fill="#fff" stroke="#bbb" />
    {mark === "x" ? (
      <path d="M23 9h6v4h-6zM23 15h6v4h-6zM23 21h6v4h-6zM14.500 21h6v4h-6zM6 21h6v4H6z" fill={c} />
    ) : (
      <path d="M22 10h7M22 14h7M19 18h10M14 22h15M14 26h15" stroke={c} strokeWidth="2.200" />
    )}
    <path d="M5 7l15-2v15L5 20z" fill="#eef3ee" opacity=".95" />
    <path d={mark === "x" ? "M8 8l9 11M16 7L8 19" : "M7 8l2 10 3-8 3 8 3-11"} stroke={c} strokeWidth={mark === "x" ? 3 : 2} fill="none" />
  </svg>
);
const OutlookIcon = ({ size = 32 }) => (
  <svg width={size} height={size} viewBox="0 0 32 32">
    <path d="M6 1h20v22H1V8q0-6 5-7z" fill="#f7b64a" stroke="#fff" />
    <path d="M5 8h17v14H5z" fill="#fdf0d0" />
    <path d="M8 12h23v17H8z" fill="#fff" stroke="#cc9a3a" />
    <circle cx="18" cy="20" r="9.500" fill="#fbc02d" stroke="#c98a16" />
    <path d="M13 17.500l5 5 7-4" stroke="#6b4a10" strokeWidth="2" fill="none" />
  </svg>
);
const IeIcon = () => (
  <svg width="34" height="34" viewBox="0 0 34 34" fill="none">
    <path d="M26.500 23a10 10 0 1 1 1.500-5.500H10" stroke="#2b95dd" strokeWidth="5.500" />
    <path d="M26 22.500a9.500 9.500 0 0 1-16-4q0-8 8-9.500" stroke="#6cc2f2" strokeWidth="1.500" />
    <path d="M6 31C-3 30 8 10 20 5c8-4 12-2 10 3" stroke="#f5b81c" strokeWidth="2.800" />
  </svg>
);
const ExplorerIcon = () => (
  <svg width="34" height="34" viewBox="0 0 34 34">
    <path d="M2 5q0-2 2-2h8l2 3h16q2 0 2 2v18H2z" fill="#f0d584" />
    <path d="M5 5h5M13 7h5M20 9h6" stroke="#3b8ad0" strokeWidth="2.500" />
    <path d="M2 10h30v19H2z" fill="#fae7a2" stroke="#d8b75a" />
    <path d="M6 32V22q0-2 2-2h18q2 0 2 2v10h-5v-6H11v6z" fill="#8fcdec" stroke="#4a9cc8" />
  </svg>
);
const ChromeIcon = () => (
  <svg width="28" height="28" viewBox="0 0 28 28">
    <circle cx="14" cy="14" r="14" fill="#3aa648" />
    <path d="M14 14L1.900 7A14 14 0 0 1 26.100 7z" fill="#d93025" />
    <path d="M14 0a14 14 0 0 1 12.100 7H14z" fill="#d93025" />
    <path d="M14 7h12.100A14 14 0 0 1 13 28l7-10.500z" fill="#f9cf22" />
    <circle cx="14" cy="14" r="6.500" fill="#f3f3f3" />
    <circle cx="14" cy="14" r="5" fill="#2f74c8" />
  </svg>
);
const CommIcon = () => (
  <svg width="31" height="31" viewBox="0 0 31 31">
    <rect x=".5" y=".5" width="30" height="30" rx="2" fill="#3a62c4" stroke="#88a8e8" />
    <path d="M13 5.500L8 9.500l5 4M9 9.500h11q5.500 0 5.500 5.500t-5.500 5.500h-.5V25l-5-4.500H10q-4.500 0-4.500-3t4.500-3h8" fill="none" stroke="#fff" strokeWidth="2.400" strokeLinejoin="round" />
  </svg>
);
const PdfIcon = ({ size = 28 }) => (
  <svg width={size} height={size} viewBox="0 0 28 28">
    <rect width="28" height="28" fill="#f4f4f4" />
    <rect width="26" height="2.500" fill="#a8141c" />
    <path d="M4 24q5-3 8-10T13 5q-2 0 0 5t11 9q2 0 0-1.500t-16 3Q4 22 4 24" fill="none" stroke="#c8202a" strokeWidth="1.600" />
  </svg>
);

const trayIcons = [
  <S key="a"><path d="M2 1h12v8q-1 5-6 6-5-1-6-6z" fill="#f2f6f8" stroke="#9fb6c4" /><path d="M4 4h2M7 4h2M10 4h2M4 7h2M7 7h2M10 7h2M5 10h6" stroke="#4a86b8" strokeWidth="1.600" /></S>,
  <S key="b"><path d="M5 7V4q0-3 3-3t3 3v3" stroke="#ddd" strokeWidth="1.800" /><rect x="3" y="7" width="10" height="8" fill="#c9c9c9" stroke="#eee" /></S>,
  <S key="c"><rect x="3" y="0" width="5" height="5" fill="#ccc" /><rect x="2" y="5" width="7" height="9" fill="#888" /><circle cx="11" cy="11" r="4.800" fill="#1e9a2c" /><path d="M8.500 11l2 2 3-4.500" stroke="#fff" strokeWidth="1.600" /></S>,
  <S key="d"><circle cx="8" cy="8" r="7" fill="#cfdae0" /><path d="M8 2a6 6 0 0 1 5 9L7 6z" fill="#2a6fae" /><path d="M2 10q4-5 8 4" stroke="#3f9a58" strokeWidth="2.500" /></S>,
  <S key="e"><rect x="4" y="1" width="9" height="13" fill="#9bd0f0" stroke="#4a90c0" /><path d="M6 4h5v3H6z" fill="#fff" /><ellipse cx="8" cy="8" rx="7.500" ry="3" stroke="#e89b2c" strokeWidth="1.500" transform="rotate(-20 8 8)" /></S>,
  <S key="f"><rect width="16" height="16" rx="1.500" fill="#e0651c" /><path d="M8 2q3 2 0 4t0 3M4 10h7q0 2-3.500 2T4 10M3 14h9M11.500 9.500q2 0 0 2" stroke="#fff" strokeWidth="1.200" /></S>,
  <S key="g"><rect x="1" y="3" width="14" height="10" fill="#fbe08c" stroke="#d8a020" /><path d="M1 3l7 6 7-6M1 13l5-5M15 13l-5-5" stroke="#b8801c" /></S>,
  <OutlookIcon key="h" size={16} />,
  <S key="i"><path d="M2 1v14" stroke="#fff" strokeWidth="1.500" /><path d="M3 2h9v6H3z" fill="#fff" /><path d="M11 6l5 9H6z" fill="#f8cc20" stroke="#a07a00" /><path d="M11 9v3M11 13v1" stroke="#000" strokeWidth="1.200" /></S>,
  <S key="j"><path d="M8 2l6 6-6 6-6-6z" fill="#b4b4b4" stroke="#777" /></S>,
  <S key="k"><rect width="16" height="16" fill="#999" /><circle cx="8" cy="5" r="4" fill="#d81c1c" /><path d="M3 14q5-5 10 0z" fill="#eee" /><circle cx="12" cy="12" r="3.500" fill="#d81c1c" /><path d="M10.500 10.500l3 3m0-3l-3 3" stroke="#fff" /></S>,
  <S key="l"><path d="M2 1h12v8q-1 5-6 6-5-1-6-6z" fill="#e8eef8" stroke="#2a52a0" strokeWidth="1.500" /><path d="M5 4l3 7 3-7" stroke="#d01c1c" strokeWidth="2.200" /></S>,
  <S key="m"><rect width="16" height="16" rx="1" fill="#3a86cc" stroke="#cde" /><circle cx="6" cy="5.500" r="3" fill="#e6f2fc" /><path d="M7 7l6 6" stroke="#e6f2fc" strokeWidth="2.500" /></S>,
  <S key="n"><path d="M5 5h5q4.500 0 4.500 3.500M11 11H6q-4.500 0-4.500-3.500" stroke="#16a42a" strokeWidth="2.800" /><path d="M9 1l5 4-5 4zM7 7l-5 4 5 4z" fill="#16a42a" /></S>,
  <PdfIcon key="o" size={15} />,
  <S key="p"><path d="M2 15v-2M5 15v-4M8 15V8.500M11 15V6M14 15V3.500" stroke="#fff" strokeWidth="2" /></S>,
  <S key="q"><path d="M2 3h7v11H2zM4 1h3v2" stroke="#fff" strokeWidth="1.500" /><path d="M8 5h6v4q0 2-3 2t-3-2zM9.500 2v3M12.500 2v3M11 11v4" stroke="#fff" strokeWidth="1.500" fill="#222" /></S>,
  <S key="r"><path d="M1 5h3l4-4v13l-4-4H1z" fill="#e8e8e8" /><circle cx="11.500" cy="11" r="4" fill="#d8282c" stroke="#fff" strokeWidth=".6" /><path d="M9 8.500l5 5" stroke="#fff" strokeWidth="1.300" /></S>,
];

const fmMenu = [["File", 32, 18], ["Edit", 34, 20], ["Format", 52, 38], ["View", 39, 25], ["Special", 51, 37], ["Graphics", 60, 46], ["Table", 40, 29]];
const figRows = [["116", 28], ["105", 28], ["100", 28], ["64.8", 33], ["29.3", 33], ["27.4", 33], ["pass", 36]];
const layers = [["mt3", 27], ["Via2", 32], ["mt2", 27], ["Via1", 32], ["mt1", 26], ["poly", 28]];
const resultRows = [...Array(11).fill("94"), "94*", "94+", "93+", "92+", "89"];

function FrameMaker() {
  return (
    <Frame>
      <FrameTitle>
        <TitleText><FmLogo /><Fit w={322}>{"Adobe FrameMaker - [D:\\VPS\\Builds\\vps616_ISR7\\vpsl\\vsaPl"}</Fit></TitleText>
        <Caption $h={18}>
          <CapBtn $w={28}><CapIcon kind="min" /></CapBtn>
          <CapBtn $w={27}><CapIcon kind="restore" /></CapBtn>
          <CapBtn $w={46}><CapIcon kind="x" /></CapBtn>
        </Caption>
      </FrameTitle>
      <MenuRow>
        <MenuItem $w={23}><FmMenuLogo /></MenuItem>
        {fmMenu.map(([t, cell, w]) => (
          <MenuItem key={t} $w={cell}><Fit w={w}>{t}</Fit></MenuItem>
        ))}
        <Spacer />
        <MdiButton><S w={9}><path d="M2 13h9" stroke="#7c97ae" strokeWidth="3" /></S></MdiButton>
        <MdiButton><S w={11}><path d="M5 2h9v7h-3M2 6h8v8H2zM5 3h9M2 7h8" stroke="#7c97ae" strokeWidth="1.800" /></S></MdiButton>
        <MdiButton><S w={10}><path d="M2 2l12 12M14 2L2 14" stroke="#7c97ae" strokeWidth="3" /></S></MdiButton>
      </MenuRow>
      <Bar $h={27} $pl={2}>
        <Sep $l={0} $r={4} />
        <Cell $w={20}><S w={17}><circle cx="8" cy="8" r="7.800" fill="#1674a8" /><text x="8" y="12.500" fontSize="13" fontWeight="bold" fontFamily="Open Sans" textAnchor="middle" fill="#fff">?</text></S></Cell>
        <Cell $w={28}><S w={17}><path d="M1 1h14v4H1z" fill="#fff" stroke="#111" /><path d="M2 7v8M6 7v8M2 15h4" stroke="#111" strokeDasharray="1 1.500" /><path d="M14 7v5H9m2-2.500L8.500 12l2.500 2.500" stroke="#111" strokeWidth="1.400" /></S></Cell>
        <Sep $l={0} $r={1} />
        <Cell $w={24}><S w={17}><path d="M2 .5h8.500l3.500 3.500v11.500H2z" fill="#fff" stroke="#3a78b8" /><path d="M10 .5V4.500h4" stroke="#3a78b8" /></S></Cell>
        <Cell $w={25}><S w={17}><path d="M1 13V4h5l1.500 2H13v3" fill="#f7dca0" stroke="#8a6a2c" /><path d="M1 14l3.500-6H16l-3.500 6z" fill="#f4d08a" stroke="#8a6a2c" /></S></Cell>
        <Cell $w={24}><S w={16}><path d="M1 1h14v14H1z" fill="#3a2a80" /><path d="M4 1h8v5H4z" fill="#e8e8f8" /><path d="M4 9h8v6H4z" fill="#fff" /><path d="M10 2v3" stroke="#3a2a80" strokeWidth="1.500" /></S></Cell>
        <Cell $w={24}><S w={17}><path d="M4 6V1h8v5" fill="#fff" stroke="#45618a" /><path d="M1 6h14v6H1z" fill="#a8bcd4" stroke="#45618a" /><path d="M3 10h10v5H3z" fill="#fff" stroke="#45618a" /></S></Cell>
        <Sep $l={2} $r={2} />
        <Cell $w={24}><S w={17}><path d="M5 1l4 9M11 1L7 10" stroke="#999" strokeWidth="1.800" /><circle cx="5" cy="12.500" r="2.200" stroke="#999" strokeWidth="1.500" /><circle cx="11" cy="12.500" r="2.200" stroke="#999" strokeWidth="1.500" /></S></Cell>
        <Cell $w={24}><S w={17}><path d="M1 1h9v11H1z" fill="#999" /><path d="M6 6h9v9H6z" fill="#aaa" stroke="#eee" /></S></Cell>
      </Bar>
      <Bar $h={26} $pl={5}>
        <Sep $l={0} $r={4} />
        <Cell $w={25}><Lines /></Cell>
        <Cell $w={25}><Lines full /></Cell>
        <Sep $l={4} $r={4} />
        <Cell $w={26}><DownArrow lead="l" /></Cell>
        <Cell $w={25}><DownArrow /></Cell>
        <Cell $w={23}><DownArrow lead="r" /></Cell>
        <Cell $w={25}><DownArrow plus /></Cell>
        <Sep $l={3} $r={2} />
        <Cell $w={25}><S w={16}><path d="M2.500 1h7l4 4v10h-11z" fill="#f7f01c" stroke="#111" strokeWidth="1.200" /><path d="M4.500 5h4M4.500 7.500h7M4.500 10h7M4.500 12.500h7" stroke="#111" /></S></Cell>
      </Bar>
      <Bar $h={28} $pl={2}>
        <DocTab $w={51} $pl={12}><Fit w={22}>vpsl</Fit></DocTab>
        <DocTab $w={47}><Fit w={22}>vpsl</Fit></DocTab>
        <DocTab $w={59}><Fit w={32}>irdrop</Fit></DocTab>
        <DocTab $w={80}><Fit w={58}>emanalysis</Fit></DocTab>
        <Spacer />
        <Tri d="left" w={13} c="#999" />
        <Tri d="right" w={13} c="#999" />
        <Gap $w={3} />
      </Bar>
      <Workspace>
        <DocPane>
          <Page>
            <Figure>
              <FigPanel>
                <FigTable>
                  {figRows.map(([t, w], i) => (
                    <FigRow key={t} $alt={i % 2}><FigCheck><Check /></FigCheck><Fit w={w}>{t}</Fit></FigRow>
                  ))}
                </FigTable>
                <FigLegend><Fit w={64}>Selected</Fit></FigLegend>
                <FigHead><Cell $w={19}>#</Cell><Sep $l={0} $r={16} />Pass</FigHead>
                <FigBody><FigScroll><Cell $w={16}><Tri d="left" /></Cell><Sep $l={0} $r={0} /></FigScroll></FigBody>
              </FigPanel>
            </Figure>
            <Para $mt={20}><Fit w={104}>Youc an also</Fit></Para>
            <Para $mt={0}><Fit w={108}>the Pass/Fail</Fit></Para>
            <Para $mt={19}><Fit w={112}>The Selected</Fit></Para>
          </Page>
          <Footer><Fit w={66}>June 2014</Fit></Footer>
          <FlowBar><Fit w={113}>Flow: A  ¶: p para</Fit></FlowBar>
        </DocPane>
        <SymbolStrip>
          <Symbol>¶</Symbol>
          <Symbol $italic>f</Symbol>
          <Symbol><S w={12}><path d="M2 14L14 2v12z" stroke="#000" strokeWidth="2.500" /></S></Symbol>
          <Symbol>Σ</Symbol>
          <Symbol><S w={14}><path d="M9 14q-4-1-3-6 .5-4 5-5" stroke="#000" strokeWidth="2.500" /><path d="M1 8h9L6 13z" fill="#000" /></S></Symbol>
          <Symbol $h={14}><Tri w={7} /></Symbol>
          <ScrollThumb><S w={8}><path d="M1 2h14M1 7h14M1 12h14" stroke="#555" strokeWidth="2" /></S></ScrollThumb>
          <Symbol $h={27}><Tri w={7} d="down" /></Symbol>
        </SymbolStrip>
      </Workspace>
      <BottomScroll><HThumb /><Tri d="right" /></BottomScroll>
    </Frame>
  );
}

function VncWindow() {
  return (
    <Vnc>
      <VncTitle>
        <VncName><VncLogo /><Fit w={107}>rlno-leenap:2 (anuk)</Fit></VncName>
        <Caption $h={18}>
          <CapBtn $w={28} $light><CapIcon kind="min" /></CapBtn>
          <CapBtn $w={26} $light><CapIcon kind="max" /></CapBtn>
          <CapBtn $w={45} $light><CapIcon kind="x" /></CapBtn>
        </Caption>
      </VncTitle>
      <VncClient>
        <RemoteDesk><RemoteBack /></RemoteDesk>
        <VScroll>
          <Tri w={7} />
          <VThumb><S w={8}><path d="M1 2h14M1 7h14M1 12h14" stroke="#555" strokeWidth="2" /></S></VThumb>
        </VScroll>
      </VncClient>
    </Vnc>
  );
}

function VsaPlot() {
  return (
    <Vsa>
      <VsaTitle>
        <VsaName><XLogo /><Fit w={104}>{"vsaPlot <@nod"}</Fit></VsaName>
        <VsaClose><S w={11}><path d="M2 2l12 12M14 2L2 14" stroke="#fff" strokeWidth="3.500" /></S></VsaClose>
      </VsaTitle>
      <VsaMenu>
        <MenuItem $w={38}><Fit w={25}>File</Fit></MenuItem>
        <MenuItem $w={46}><Fit w={34}>View</Fit></MenuItem>
        <MenuItem $w={60}><Fit w={56}>Options</Fit></MenuItem>
      </VsaMenu>
      <VsaTools>
        <Handle />
        <Gap $w={7} />
        <OpenDb />
        <Sep $l={9} $r={6} />
        <Mag kind="in" /><Gap $w={11} /><Mag kind="out" /><Gap $w={11} /><Mag kind="fit" />
        <Sep $l={9} $r={7} />
        <ZoomArea /><Gap $w={9} /><ZoomMax />
        <Sep $l={6} $r={6} />
        <TableIcon p /><Gap $w={6} /><TableIcon />
        <Sep $l={6} $r={8} />
        <Mag kind="A" />
      </VsaTools>
      <Main>
        <Side>
          <DockHead><Float /></DockHead>
          <LayersGroup $ml={4}>
            <legend><Fit w={98}>Select Layers</Fit></legend>
            <LayersBody>
              <Button>AV</Button>
              <Button $dim>NV</Button>
              <ListRow>
                <LayerList>
                  {layers.map(([t, w]) => <li key={t}><Check on /><Fit w={w}>{t}</Fit></li>)}
                </LayerList>
                <Arrows>
                  <SmallBtn $w={24} $h={22}><Tri w={12} /></SmallBtn>
                  <SmallBtn $w={24} $h={22}><Tri w={12} d="down" /></SmallBtn>
                </Arrows>
              </ListRow>
              <Button $wide><Fit w={54}>Redraw</Fit></Button>
            </LayersBody>
          </LayersGroup>
          <SideGap />
          <DockHead $line $h={23}><Float /></DockHead>
          <ScaleBox><ColorScale /></ScaleBox>
          <RangeNote><Fit w={150}>Display Out Of Range</Fit></RangeNote>
        </Side>
        <Center>
          <TopDocks>
            <RangeDock>
              <DockHead $pr={9}><Float /></DockHead>
              <RangeGroup $ml={5}>
                <legend><Fit w={78}>Set Range</Fit></legend>
                <RangeLine $pt={11}>
                  <Fit w={130}>Customize Range</Fit><Gap $w={12} />
                  <NumInput><Fit w={66}>0.338591</Fit></NumInput>
                  <Gap $w={12} /><Fit w={13}>to</Fit><Gap $w={12} />
                  <NumInput><Fit w={57}>1.61328</Fit></NumInput>
                  <Gap $w={6} /><Button $w={76}><Fit w={43}>Reset</Fit></Button>
                </RangeLine>
                <RangeLine $pt={7}>
                  <Gap $w={1} /><Radio /><Gap $w={7} /><Fit w={70}>All Layers</Fit><Gap $w={268} />
                  <Radio on /><Gap $w={6} /><Fit w={116}>Selected Layers</Fit>
                </RangeLine>
              </RangeGroup>
            </RangeDock>
            <SelectionDock>
              <DockHead />
              <SelectionGroup $ml={3}>
                <legend><Fit w={66}>Selection</Fit></legend>
                <SelRow><Fit w={64}>Analysis:</Fit></SelRow>
                <SelRow><Fit w={40}>Plots:</Fit></SelRow>
              </SelectionGroup>
            </SelectionDock>
          </TopDocks>
          <Plot />
          <StatusLine>X:   43.126,  Y:     2.158</StatusLine>
        </Center>
      </Main>
    </Vsa>
  );
}

function ResultsPanel() {
  return (
    <Results>
      <ResHead>
        <HeadBtn><Float /></HeadBtn>
        <HeadBtn><S w={9}><path d="M2 2l12 12M14 2L2 14" stroke="#000" strokeWidth="2.800" /></S></HeadBtn>
      </ResHead>
      <ResGroup $mt={3} $h={529} $ml={4}>
        <legend><Fit w={58}>Results:</Fit></legend>
        <ResGrid>
          <HeadRow $bold $pl={3}>
            <HeadCell $w={20}>#</HeadCell>
            <HeadCell $w={100}><Fit w={70}>Pass/Fail</Fit></HeadCell>
            <HeadCell $w={43} $j="flex-end"><Fit w={28}>Lay</Fit></HeadCell>
          </HeadRow>
          <ScrollCol><SmallBtn><Tri /></SmallBtn></ScrollCol>
          <Rows>
            {resultRows.map((r, i) => {
              const on = r.endsWith("*");
              return (
                <Row key={i} $on={on} $alt={i % 2 === 1}>
                  <RowCell $w={20} $pl={4}><Check on={r.endsWith("+")} light={on} /></RowCell>
                  <RowCell $w={100} $pl={2} $pb={2}><Fit w={91}>{`passed-${r.slice(0, 2)}....`}</Fit></RowCell>
                  <RowCell $w={43} $pl={2} $pb={2}><Fit w={31}>Via1</Fit></RowCell>
                </Row>
              );
            })}
          </Rows>
          <ScrollCol>
            <Spacer />
            <SmallBtn $h={12} />
            <TinyGap />
            <SmallBtn $h={15}><Tri d="down" /></SmallBtn>
          </ScrollCol>
          <ScrollRow>
            <SmallBtn><Tri d="left" /></SmallBtn><SmallBtn /><Spacer /><SmallBtn><Tri d="right" /></SmallBtn>
          </ScrollRow>
        </ResGrid>
      </ResGroup>
      <ResGroup $mt={1} $h={149} $ml={4}>
        <legend><Fit w={127}>Selected Results:</Fit></legend>
        <ResGrid $mt={3}>
          <WideHead>
            <HeadCell $w={20} $dim>#</HeadCell>
            <HeadCell $w={100} $dim $j="space-around">
              <Fit w={65}>Pass/Fail</Fit>
              <S w={15}><path d="M14 2L8 14 2 2z" stroke="#bbb" /></S>
            </HeadCell>
            <HeadCell $w={63} $j="flex-end"><Fit w={34}>Laye</Fit></HeadCell>
          </WideHead>
          <EmptyBody />
          <ScrollRow $span="1 / 3">
            <SmallBtn><Tri d="left" /></SmallBtn><SmallBtn $w={18} /><Spacer /><SmallBtn><Tri d="right" /></SmallBtn>
          </ScrollRow>
        </ResGrid>
      </ResGroup>
    </Results>
  );
}

function PaintWindow() {
  const circle = (plus) => (
    <S w={16}><circle cx="8" cy="8" r="7.300" fill="#fafafa" stroke="#777" /><path d={plus ? "M4.500 8h7M8 4.500v7" : "M4.500 8h7"} stroke="#333" strokeWidth="1.600" /></S>
  );
  return (
    <Paint>
      <PaintTitle>
        <PaintName><PaintLogo /><Fit w={80}>Untitled - Paint</Fit></PaintName>
        <Caption $h={19} $dark>
          <CapBtn $w={28}><CapIcon kind="min" /></CapBtn>
          <CapBtn $w={27}><CapIcon kind="max" /></CapBtn>
          <CapBtn $w={45} $red><CapIcon kind="x" /></CapBtn>
        </Caption>
      </PaintTitle>
      <PaintClient>
        <PaintArea>
          <Sheet />
          <PaintScroll><Tri w={6} /><Tri w={6} d="down" /></PaintScroll>
        </PaintArea>
        <PaintStatus>
          <StatusCell $w={155} $pl={2}><S w={12}><path d="M8 1v14M1 8h14M6 3l2-2 2 2M6 13l2 2 2-2M3 6L1 8l2 2M13 6l2 2-2 2" stroke="#24426a" strokeWidth="1.400" /></S></StatusCell>
          <StatusCell $w={156}><S w={14}><path d="M2 14V2M.5 4L2 2l1.500 2M6 14h9M13 12l2 2-2 2" stroke="#24426a" /><rect x="5.500" y="2.500" width="9" height="8" stroke="#24426a" strokeDasharray="2 1" /></S></StatusCell>
          <StatusCell $w={156}><S w={14}><path d="M2 14V2M.5 4L2 2l1.500 2M6 14h9M13 12l2 2-2 2" stroke="#24426a" /><rect x="5.500" y="2.500" width="9" height="8" stroke="#24426a" strokeWidth="1.500" /></S><Fit w={63}>241 × 125px</Fit></StatusCell>
          <StatusCell $w={156} />
          <StatusCell $w={247} />
          <Gap $w={20} /><Fit w={30}>100%</Fit><Gap $w={6} />
          {circle(false)}
          <Gap $w={9} />
          <svg width="86" height="18" viewBox="0 0 86 18"><path d="M0 7.500h84" stroke="#999" /><path d="M0 8.500h84" stroke="#fff" /><path d="M39 1.500h8v11l-4 4-4-4z" fill="#f4f4f4" stroke="#777" /></svg>
          <Gap $w={11} />
          {circle(true)}
        </PaintStatus>
      </PaintClient>
    </Paint>
  );
}

function TaskBar() {
  return (
    <Taskbar>
      <TaskItem $w={54} $mr={0}><Orb /></TaskItem>
      <TaskItem $w={68} $mr={0}><Office c="#2e8b3c" bg="#d5ecc8" mark="x" /></TaskItem>
      <TaskItem $w={58}><Office c="#2c5aa8" bg="#c9dcf4" mark="w" /></TaskItem>
      <TaskItem $w={58} $open><OutlookIcon /></TaskItem>
      <TaskItem $w={58} $open><IeIcon /></TaskItem>
      <TaskItem $w={50} $mr={0} $open><ExplorerIcon /></TaskItem>
      <StackEdge /><StackEdge />
      <TaskItem $w={62} $mr={4}><ChromeIcon /></TaskItem>
      <TaskItem $w={58} $open><FmLogo size={30} shield /></TaskItem>
      <TaskItem $w={58} $open><CommIcon /></TaskItem>
      <TaskItem $w={50} $mr={0} $open><PdfIcon /></TaskItem>
      <StackEdge /><StackEdge /><Gap $w={4} />
      <TaskItem $w={58} $open><VncLogo size={32} /></TaskItem>
      <TaskItem $w={58} $open $active><PaintLogo size={32} /></TaskItem>
      <PowerBox>
        <Battery><Fit w={31}>100%</Fit></Battery>
        <S w={18}><path d="M6 2.500h5v2h4M6 13.500h5v-2h4M11 3v10M6 2.500Q1 3 1 8t5 5.500" fill="#111" stroke="#ddd" strokeWidth="1.300" /></S>
      </PowerBox>
      <Tray>{trayIcons.map((icon) => <Cell key={icon.key} $w={24.1}>{icon}</Cell>)}</Tray>
      <Clock><Fit w={43}>1:58 PM</Fit><Fit w={52}>5/19/2014</Fit></Clock>
      <ShowDesk />
    </Taskbar>
  );
}

export default function App() {
  return (
    <Desktop>
      <Global />
      <FrameMaker />
      <BackWindow>
        <BackTitle><Caption $h={19}><CapBtn $w={46} $light><CapIcon kind="x" /></CapBtn></Caption></BackTitle>
        <BackBody><BackFoot><BackThumb /></BackFoot></BackBody>
      </BackWindow>
      <VncWindow />
      <VsaPlot />
      <ResultsPanel />
      <PaintWindow />
      <TaskBar />
    </Desktop>
  );
}
